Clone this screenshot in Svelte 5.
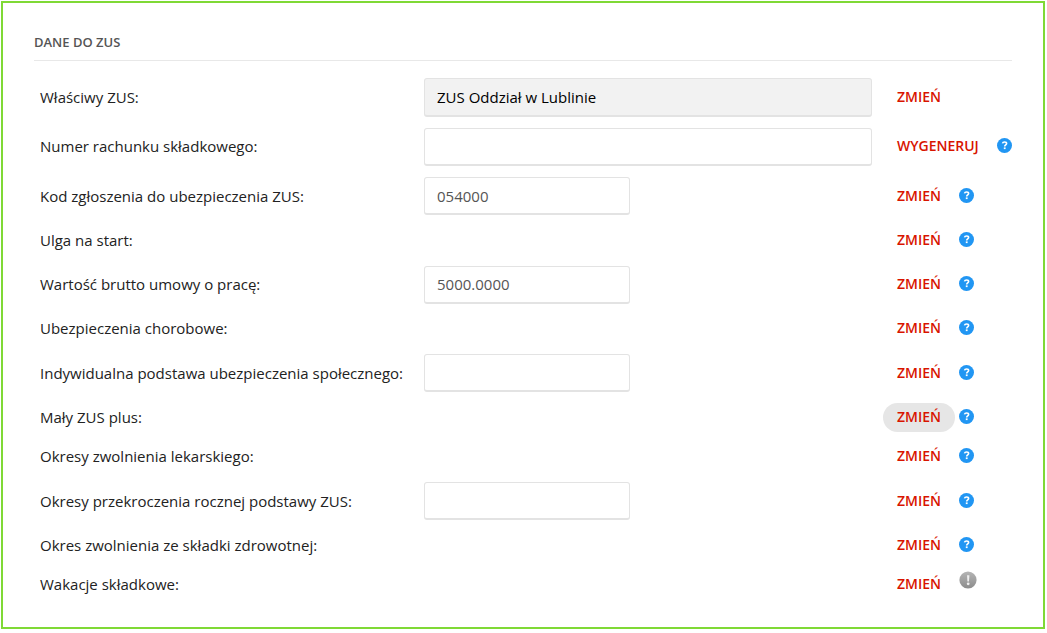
<script>
  const rows = [
    { id: 'branch', label: 'Właściwy ZUS:', field: 'wide', value: 'ZUS Oddział w Lublinie', locked: true, action: 'ZMIEŃ' },
    { id: 'account', label: 'Numer rachunku składkowego:', field: 'wide', value: '', compact: true, action: 'WYGENERUJ', icon: 'help' },
    { id: 'code', label: 'Kod zgłoszenia do ubezpieczenia ZUS:', field: 'short', value: '054000', action: 'ZMIEŃ', icon: 'help' },
    { id: 'start', label: 'Ulga na start:', action: 'ZMIEŃ', icon: 'help' },
    { id: 'gross', label: 'Wartość brutto umowy o pracę:', field: 'short', value: '5000.0000', compact: true, action: 'ZMIEŃ', icon: 'help' },
    { id: 'sickness', label: 'Ubezpieczenia chorobowe:', action: 'ZMIEŃ', icon: 'help' },
    { id: 'base', label: 'Indywidualna podstawa ubezpieczenia społecznego:', field: 'short', value: '', action: 'ZMIEŃ', icon: 'help' },
    { id: 'small', label: 'Mały ZUS plus:', action: 'ZMIEŃ', icon: 'help', active: true },
    { id: 'leave', label: 'Okresy zwolnienia lekarskiego:', action: 'ZMIEŃ', icon: 'help' },
    { id: 'excess', label: 'Okresy przekroczenia rocznej podstawy ZUS:', field: 'short', value: '', action: 'ZMIEŃ', icon: 'help' },
    { id: 'health', label: 'Okres zwolnienia ze składki zdrowotnej:', action: 'ZMIEŃ', icon: 'help' },
    { id: 'holiday', label: 'Wakacje składkowe:', action: 'ZMIEŃ', icon: 'notice' }
  ];
</script>

<section class="panel">
  <h2>DANE DO ZUS</h2>
  <form class="rows">
    {#each rows as row (row.id)}
      <div class="row" class:with-field={row.field} class:compact={row.compact}>
        {#if row.field}
          <label for={row.id}>{row.label}</label>
          <input
            id={row.id}
            type="text"
            class={row.field}
            class:locked={row.locked}
            value={row.value}
            readonly={row.locked}
          />
        {:else}
          <span class="label" id={row.id}>{row.label}</span>
          <span></span>
        {/if}
        <div class="actions">
          <button type="button" class="action" class:active={row.active}>{row.action}</button>
          {#if row.icon === 'help'}
            <svg class="icon" viewBox="0 0 15 15" width="15" height="15" aria-hidden="true">
              <circle cx="7.5" cy="7.5" r="7.5" fill="#2196f3" />
              <path d="M5.5 5.4C5.7 4.4 6.5 4 7.6 4c1.2 0 2 .6 2 1.5 0 1.3-1.9 1.3-1.9 2.9" fill="none" stroke="#fff" stroke-width="1.6" />
              <rect x="6.8" y="9.4" width="1.8" height="1.7" fill="#fff" />
            </svg>
          {:else if row.icon === 'notice'}
            <svg class="icon notice" viewBox="0 0 18 18" width="18" height="18" aria-hidden="true">
              <defs>
                <linearGradient id="notice-fill" x1="0" y1="0" x2="0" y2="1">
                  <stop offset="0" stop-color="#b5b5b5" />
                  <stop offset="1" stop-color="#8c8c8c" />
                </linearGradient>
              </defs>
              <circle cx="9" cy="9" r="8.6" fill="url(#notice-fill)" />
              <path d="M8 4.3h2.4l-.4 6.2H8.4z" fill="#eee" />
              <circle cx="9.2" cy="12.8" r="1.4" fill="#eee" />
            </svg>
          {/if}
        </div>
      </div>
    {/each}
  </form>
</section>

<style>
  :global(body) {
    background: #fff;
  }

  .panel {
    box-sizing: border-box;
    margin: 1px 2px 4px 1px;
    padding: 29px 31px 23px;
    border: 2px solid #7fd935;
    font-family: 'Open Sans', sans-serif;
    color: #222;
  }

  h2 {
    margin: 0;
    padding-bottom: 8px;
    border-bottom: 1px solid #e8e8e8;
    color: #555;
    font-size: 13px;
    font-weight: 600;
    line-height: 20px;
  }

  .rows {
    padding: 11px 0 0 6px;
  }

  .row {
    display: grid;
    grid-template-columns: 373px minmax(0, 1fr) 129px;
    column-gap: 11px;
    align-items: center;
    height: 39px;
  }

  .with-field {
    height: 50px;
  }

  .compact {
    height: 49px;
  }

  label,
  .label {
    padding-bottom: 1px;
    font-size: 15px;
    line-height: 20px;
    white-space: nowrap;
  }

  input {
    box-sizing: border-box;
    width: 100%;
    height: 38px;
    padding: 0 12px;
    border: 1px solid #e3e3e3;
    border-bottom-width: 2px;
    border-radius: 3px;
    background: #fff;
    color: #555;
    font: 15px/20px 'Open Sans', sans-serif;
  }

  .short {
    width: 46%;
  }

  .locked {
    height: 39px;
    background: #f2f2f2;
    color: #000;
  }

  .actions {
    display: flex;
    align-items: center;
    gap: 4px;
  }

  .action {
    height: 29px;
    padding: 0 14px 1px;
    border: 0;
    border-radius: 15px;
    background: transparent;
    color: #d81400;
    font: 600 14px/20px 'Open Sans', sans-serif;
    white-space: nowrap;
    cursor: pointer;
  }

  .active {
    background: #e6e6e6;
  }

  .icon {
    flex: none;
    margin-bottom: 2px;
  }

  .notice {
    margin-bottom: 10px;
  }
</style>
